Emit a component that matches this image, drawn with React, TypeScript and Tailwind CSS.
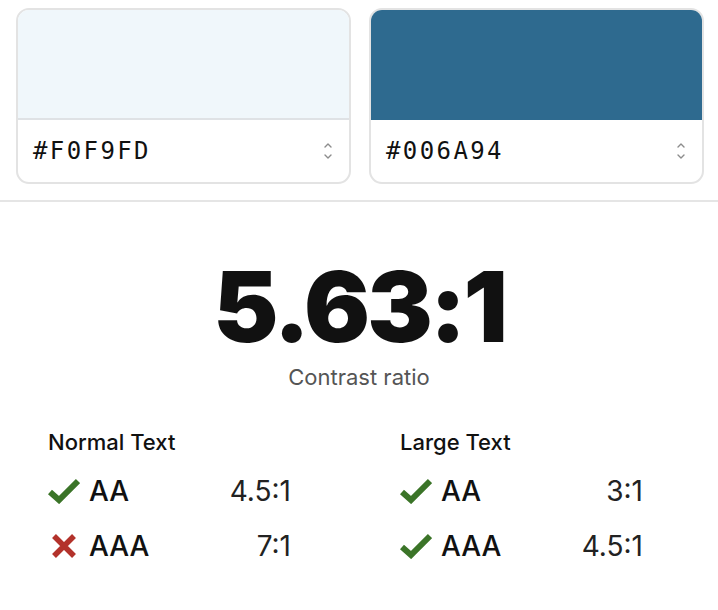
type Level = { label: string; pass: boolean; ratio: string };

const normal: Level[] = [
  { label: "AA", pass: true, ratio: "4.5:1" },
  { label: "AAA", pass: false, ratio: "7:1" },
];

const large: Level[] = [
  { label: "AA", pass: true, ratio: "3:1" },
  { label: "AAA", pass: true, ratio: "4.5:1" },
];

const Check = () => (
  <svg width="32" height="26" viewBox="0 0 32 26" className="shrink-0">
    <path d="M2 14 L11 22 L30 3" fill="none" stroke="#3b7428" strokeWidth="6" strokeLinejoin="miter" />
  </svg>
);

const Cross = () => (
  <svg width="32" height="26" viewBox="0 0 32 26" className="shrink-0">
    <path d="M6 3 L26 23 M26 3 L6 23" fill="none" stroke="#b3322b" strokeWidth="5.5" />
  </svg>
);

const UpDown = () => (
  <svg width="10" height="20" viewBox="0 0 10 20" className="shrink-0">
    <path d="M2 6 L5 3 L8 6 M2 14 L5 17 L8 14" fill="none" stroke="#8c8c8c" strokeWidth="1.4" strokeLinecap="round" strokeLinejoin="round" />
  </svg>
);

const ColorCard = ({ hex, swatch, dark }: { hex: string; swatch: string; dark?: boolean }) => (
  <div className="flex flex-col overflow-hidden rounded-[13px] border-2 border-[#e3e3e3] bg-white">
    <div
      className={`h-[110px] border-b-2 ${dark ? "border-[#2e6a8f]" : "border-[#dfe2e5]"}`}
      style={{ backgroundColor: swatch }}
    />
    <div className="flex h-[62px] items-center justify-between pl-[15px] pr-[16px]">
      <span className="font-['DejaVu_Sans_Mono',monospace] text-[24px] tracking-[0.1em] text-[#111]">{hex}</span>
      <UpDown />
    </div>
  </div>
);

const Group = ({ title, rows }: { title: string; rows: Level[] }) => (
  <div className="w-[243px]">
    <div className="text-[22px] font-medium leading-none text-[#111]">{title}</div>
    <div className="mt-[24px] flex flex-col gap-[27px]">
      {rows.map((r) => (
        <div key={r.label} className="flex h-[28px] items-center">
          <div className="flex w-[41px] items-center">{r.pass ? <Check /> : <Cross />}</div>
          <span className="text-[28px] font-medium leading-none text-[#111]">{r.label}</span>
          <span className="ml-auto text-[28px] leading-none text-[#222]">{r.ratio}</span>
        </div>
      ))}
    </div>
  </div>
);

export default function App() {
  return (
    <div className="min-h-screen bg-white font-['Inter',sans-serif]">
      <div className="grid grid-cols-2 gap-[18px] pl-[16px] pr-[14px] pt-[8px]">
        <ColorCard hex="#F0F9FD" swatch="#f0f7fb" />
        <ColorCard hex="#006A94" swatch="#2e6a8f" dark />
      </div>
      <div className="mt-[16px] border-t-2 border-[#e5e5e5]" />
      <div className="flex flex-col items-center pt-[66px]">
        <div className="text-[98px] font-black leading-[78px] tracking-[-0.03em] text-[#111]">5.63:1</div>
        <div className="mt-[15px] text-[22px] text-[#555]">Contrast ratio</div>
      </div>
      <div className="mt-[37px] flex gap-[109px] pl-[48px]">
        <Group title="Normal Text" rows={normal} />
        <Group title="Large Text" rows={large} />
      </div>
    </div>
  );
}
